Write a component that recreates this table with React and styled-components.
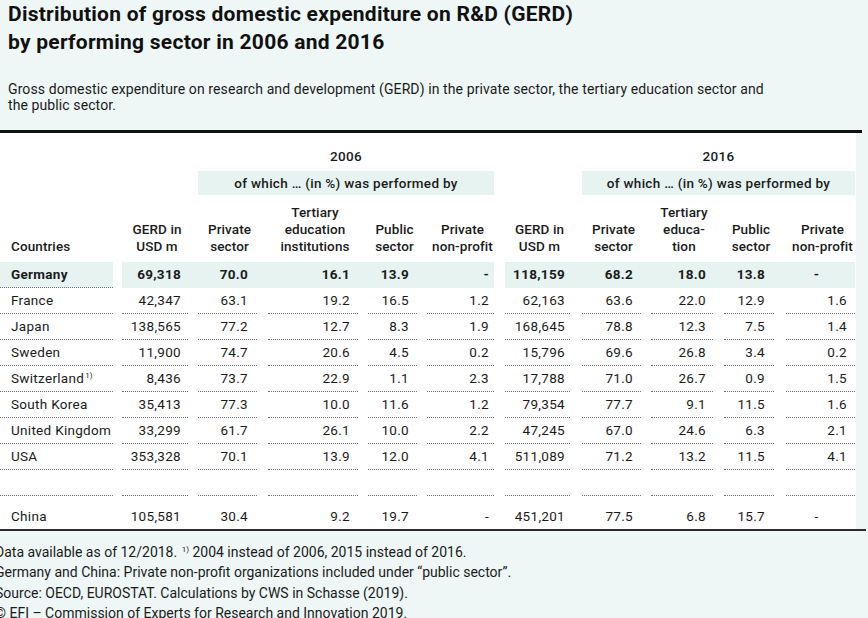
import React from "react";
import styled, { createGlobalStyle } from "styled-components";

const PAGE_BG = "#eef7f6";
const BAND = "#e6f3f1";
const INK = "#1b1b1b";
const DOT = "#6f6f6f";

const TRACKS = [113, 75, 69, 101, 59, 77, 76, 71, 72, 61, 81];
const GAPS = [0, 9, 10, 11, 10, 10, 11, 12, 10, 11, 12];
const PADS = [0, 7, 9, 8, 8, 5, 5, 8, 7, 9, 8];
const GROUP_START = [false, true, false, false, false, false, true, false, false, false, false];
const TEMPLATE = TRACKS.map((t) => `${t}px`).join(" ");

const GlobalStyle = createGlobalStyle`
  html, body {
    margin: 0;
    padding: 0;
    background: ${PAGE_BG};
  }
  body {
    font-family: Roboto, "Liberation Sans", Arial, sans-serif;
    color: ${INK};
  }
`;

const Page = styled.div`
  width: 868px;
  height: 618px;
  overflow: hidden;
  background: ${PAGE_BG};
`;

const Title = styled.h1`
  margin: 0;
  padding: 0 8px;
  font-size: 21px;
  line-height: 28px;
  font-weight: 700;
  letter-spacing: 0.25px;
  color: #111;
`;

const Subtitle = styled.p`
  margin: 25px 0 0;
  padding: 0 8px;
  font-size: 14px;
  line-height: 16px;
  letter-spacing: 0.1px;
  white-space: nowrap;
`;

const ThickRule = styled.div`
  margin-top: 17px;
  width: 862px;
  height: 3px;
  background: #111;
`;

const Panel = styled.div`
  width: 856px;
  background: #ffffff;
  font-size: 13.5px;
  letter-spacing: 0.3px;
`;

const Grid = styled.div`
  display: grid;
  grid-template-columns: ${TEMPLATE};
  height: ${(p) => p.$h}px;
  align-items: ${(p) => p.$align || "stretch"};
`;

const YearCell = styled.div`
  grid-column: ${(p) => p.$col} / span 4;
  padding: 14.5px 0 0 ${(p) => p.$gap}px;
  line-height: 17px;
  font-weight: 500;
  text-align: center;
`;

const BandCell = styled.div`
  grid-column: ${(p) => p.$col} / span 4;
  margin-left: ${(p) => p.$gap}px;
  background: ${BAND};
  line-height: 24px;
  font-weight: 500;
  text-align: center;
`;

const HeadCell = styled.div`
  padding: 0 0 7.5px ${(p) => (p.$first ? 11 : p.$gap + 4)}px;
  line-height: 17px;
  font-weight: 500;
  letter-spacing: 0.1px;
  white-space: nowrap;
  text-align: ${(p) => (p.$first ? "left" : "center")};
`;

const Cell = styled.div`
  padding-left: ${(p) => p.$gap}px;
  background: ${(p) => (p.$band && !p.$groupStart ? BAND : "transparent")};
`;

const Body = styled.div`
  box-sizing: border-box;
  height: ${(p) => p.$h}px;
  padding: ${(p) => p.$top}px ${(p) => p.$pad}px 0 ${(p) => (p.$first ? 11 : 0)}px;
  line-height: ${(p) => p.$lh}px;
  border-bottom: 1px dotted ${(p) => (p.$line ? DOT : "transparent")};
  background: ${(p) => (p.$band ? BAND : "transparent")};
  text-align: ${(p) => p.$align};
  font-weight: ${(p) => (p.$bold ? 700 : 400)};
  white-space: nowrap;
`;

const Sup = styled.sup`
  font-size: 8px;
  line-height: 0;
  vertical-align: 5px;
  margin-left: 1px;
  letter-spacing: 0;
`;

const BottomRule = styled.div`
  width: 866px;
  height: 2px;
  background: #2b2b2b;
`;

const Notes = styled.div`
  margin: 11px 0 0 -5px;
  font-size: 14px;
  line-height: 20.4px;
  white-space: nowrap;
`;

const Note = styled.div``;

const HEADERS = [
  ["Countries"],
  ["GERD in", "USD m"],
  ["Private", "sector"],
  ["Tertiary", "education", "institutions"],
  ["Public", "sector"],
  ["Private", "non-profit"],
  ["GERD in", "USD m"],
  ["Private", "sector"],
  ["Tertiary", "educa-", "tion"],
  ["Public", "sector"],
  ["Private", "non-profit"],
];

const ROWS = [
  { cells: ["Germany", "69,318", "70.0", "16.1", "13.9", "-", "118,159", "68.2", "18.0", "13.8", "-"], band: true },
  { cells: ["France", "42,347", "63.1", "19.2", "16.5", "1.2", "62,163", "63.6", "22.0", "12.9", "1.6"] },
  { cells: ["Japan", "138,565", "77.2", "12.7", "8.3", "1.9", "168,645", "78.8", "12.3", "7.5", "1.4"] },
  { cells: ["Sweden", "11,900", "74.7", "20.6", "4.5", "0.2", "15,796", "69.6", "26.8", "3.4", "0.2"] },
  { cells: ["Switzerland", "8,436", "73.7", "22.9", "1.1", "2.3", "17,788", "71.0", "26.7", "0.9", "1.5"], sup: true },
  { cells: ["South Korea", "35,413", "77.3", "10.0", "11.6", "1.2", "79,354", "77.7", "9.1", "11.5", "1.6"] },
  { cells: ["United Kingdom", "33,299", "61.7", "26.1", "10.0", "2.2", "47,245", "67.0", "24.6", "6.3", "2.1"] },
  { cells: ["USA", "353,328", "70.1", "13.9", "12.0", "4.1", "511,089", "71.2", "13.2", "11.5", "4.1"] },
  { cells: ["", "", "", "", "", "", "", "", "", "", ""] },
  { cells: ["China", "105,581", "30.4", "9.2", "19.7", "-", "451,201", "77.5", "6.8", "15.7", "-"], last: true },
];

function DataRow({ row }) {
  const h = row.last ? 33 : 26;
  return (
    <Grid $h={h}>
      {row.cells.map((v, i) => {
        const first = i === 0;
        const line = row.last ? false : row.band ? first : true;
        const align = first ? "left" : v === "-" && i === 10 ? "center" : "right";
        return (
          <Cell key={i} $gap={GAPS[i]} $band={row.band} $groupStart={GROUP_START[i]}>
            <Body
              $h={h}
              $top={row.last ? 10 : 0}
              $lh={row.last ? 20 : 25}
              $pad={PADS[i]}
              $first={first}
              $line={line}
              $band={row.band}
              $bold={row.band}
              $align={align}
            >
              {v}
              {first && row.sup ? <Sup>1)</Sup> : null}
            </Body>
          </Cell>
        );
      })}
    </Grid>
  );
}

export default function App() {
  return (
    <Page>
      <GlobalStyle />
      <Title>
        Distribution of gross domestic expenditure on R&amp;D (GERD)
        <br />
        by performing sector in 2006 and 2016
      </Title>
      <Subtitle>
        Gross domestic expenditure on research and development (GERD) in the private sector, the tertiary education sector and
        <br />
        the public sector.
      </Subtitle>
      <ThickRule />
      <Panel>
        <Grid $h={38}>
          <YearCell $col={3} $gap={GAPS[2]}>2006</YearCell>
          <YearCell $col={8} $gap={GAPS[7]}>2016</YearCell>
        </Grid>
        <Grid $h={24}>
          <BandCell $col={3} $gap={GAPS[2]}>of which … (in %) was performed by</BandCell>
          <BandCell $col={8} $gap={GAPS[7]}>of which … (in %) was performed by</BandCell>
        </Grid>
        <Grid $h={67} $align="end">
          {HEADERS.map((lines, i) => (
            <HeadCell key={i} $first={i === 0} $gap={GAPS[i]}>
              {lines.map((l, j) => (
                <div key={j}>{l}</div>
              ))}
            </HeadCell>
          ))}
        </Grid>
        {ROWS.map((row, i) => (
          <DataRow key={i} row={row} />
        ))}
      </Panel>
      <BottomRule />
      <Notes>
        <Note>
          Data available as of 12/2018. <Sup>1)</Sup> 2004 instead of 2006, 2015 instead of 2016.
        </Note>
        <Note>Germany and China: Private non-profit organizations included under “public sector”.</Note>
        <Note>Source: OECD, EUROSTAT. Calculations by CWS in Schasse (2019).</Note>
        <Note>© EFI – Commission of Experts for Research and Innovation 2019.</Note>
      </Notes>
    </Page>
  );
}
